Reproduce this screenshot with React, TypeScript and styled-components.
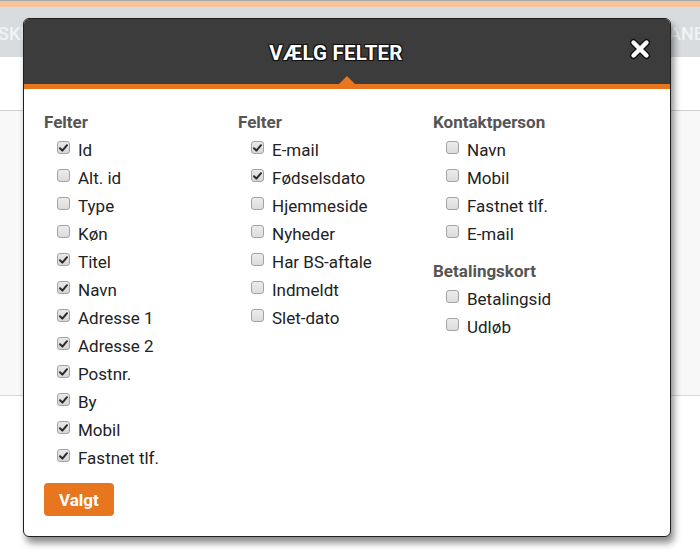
import React from 'react';
import styled, { createGlobalStyle } from 'styled-components';

const GlobalStyle = createGlobalStyle`
  html, body {
    margin: 0;
    padding: 0;
    background: #ffffff;
    font-family: Roboto, 'Liberation Sans', Arial, sans-serif;
  }
`;

const ORANGE = '#e8761f';

interface Field {
  label: string;
  checked?: boolean;
}

interface Group {
  title: string;
  fields: Field[];
}

const columns: Group[][] = [
  [
    {
      title: 'Felter',
      fields: [
        { label: 'Id', checked: true },
        { label: 'Alt. id' },
        { label: 'Type' },
        { label: 'Køn' },
        { label: 'Titel', checked: true },
        { label: 'Navn', checked: true },
        { label: 'Adresse 1', checked: true },
        { label: 'Adresse 2', checked: true },
        { label: 'Postnr.', checked: true },
        { label: 'By', checked: true },
        { label: 'Mobil', checked: true },
        { label: 'Fastnet tlf.', checked: true },
      ],
    },
  ],
  [
    {
      title: 'Felter',
      fields: [
        { label: 'E-mail', checked: true },
        { label: 'Fødselsdato', checked: true },
        { label: 'Hjemmeside' },
        { label: 'Nyheder' },
        { label: 'Har BS-aftale' },
        { label: 'Indmeldt' },
        { label: 'Slet-dato' },
      ],
    },
  ],
  [
    {
      title: 'Kontaktperson',
      fields: [{ label: 'Navn' }, { label: 'Mobil' }, { label: 'Fastnet tlf.' }, { label: 'E-mail' }],
    },
    {
      title: 'Betalingskort',
      fields: [{ label: 'Betalingsid' }, { label: 'Udløb' }],
    },
  ],
];

/* ---------- page behind the modal ---------- */

const Page = styled.div`
  position: relative;
  width: 700px;
  height: 557px;
  overflow: hidden;
  display: flex;
  flex-direction: column;
`;

const TopStrip = styled.div`
  height: 6px;
  border-top: 1px solid #a9a9a9;
  background: #f6c39b;
`;

const NavBar = styled.div`
  height: 50px;
  background: #d8dcdf;
  display: grid;
  grid-template-columns: 671px 29px;
  align-items: center;
  overflow: hidden;
  white-space: nowrap;
`;

const NavItem = styled.span`
  font-size: 18px;
  font-weight: 500;
  color: #f1f2f3;
  overflow: hidden;
  padding-top: 2px;
  text-indent: -2px;
`;

const Gap = styled.div`
  height: 53px;
  border-bottom: 1px solid #d2d2d2;
`;

const GreyPanel = styled.div`
  height: 284px;
  background: #f8f8f8;
  border-bottom: 1px solid #d9d9d9;
`;

/* ---------- modal ---------- */

const Modal = styled.div`
  position: absolute;
  left: 23px;
  top: 18px;
  width: 646px;
  border: 1px solid #1f1f1f;
  border-radius: 6px;
  background: #ffffff;
  box-shadow: 3px 6px 7px rgba(0, 0, 0, 0.45);
  overflow: hidden;
`;

const Header = styled.div`
  position: relative;
  height: 65px;
  background: #3c3c3c;
  border-bottom: 5px solid ${ORANGE};
  display: flex;
  align-items: center;
  justify-content: center;
  padding-right: 22px;
`;

const Title = styled.h2`
  margin: 2px 0 0;
  font-size: 20.5px;
  font-weight: 700;
  color: #ffffff;
  letter-spacing: 0.2px;
  text-shadow: 1px 1px 0 #111, -1px -1px 0 #111, 1px -1px 0 #111, -1px 1px 0 #111, 0 0 2px #000;
`;

const Arrow = styled.span`
  position: absolute;
  left: 315px;
  bottom: 0;
  width: 0;
  height: 0;
  border-left: 8px solid transparent;
  border-right: 8px solid transparent;
  border-bottom: 8px solid ${ORANGE};
`;

const CloseButton = styled.button`
  position: absolute;
  right: 19px;
  top: 19px;
  width: 22px;
  height: 22px;
  padding: 0;
  border: 0;
  background: transparent;
  display: flex;
  align-items: center;
  justify-content: center;
  cursor: pointer;
`;

const Body = styled.div`
  padding: 19px 20px 20px 20px;
`;

const Columns = styled.div`
  display: grid;
  grid-template-columns: 194px 195px 1fr;
`;

const Column = styled.div`
  display: flex;
  flex-direction: column;
`;

const GroupBox = styled.div`
  & + & {
    margin-top: 9px;
  }
`;

const GroupTitle = styled.div`
  height: 28px;
  line-height: 28px;
  font-size: 17px;
  font-weight: 700;
  color: #555555;
`;

const Row = styled.label`
  height: 28px;
  display: flex;
  align-items: center;
  padding-left: 13px;
  font-size: 17px;
  color: #222222;
  cursor: pointer;
`;

const Box = styled.span<{ $checked?: boolean }>`
  box-sizing: border-box;
  width: 13px;
  height: 13px;
  margin-right: 8px;
  margin-bottom: 5px;
  border: 1px solid #a3a3a3;
  border-radius: 3px;
  background: ${({ $checked }) =>
    $checked ? 'linear-gradient(#e9e9e9, #d6d6d6)' : 'linear-gradient(#ececec, #dcdcdc)'};
  display: flex;
  align-items: center;
  justify-content: center;
  flex: none;
`;

const Footer = styled.div`
  margin-top: 11px;
`;

const Button = styled.button`
  height: 33px;
  padding: 0 15px;
  border: 0;
  border-radius: 4px;
  background: ${ORANGE};
  color: #ffffff;
  font-family: Roboto, 'Liberation Sans', Arial, sans-serif;
  font-size: 17px;
  font-weight: 700;
  cursor: pointer;
`;

const CheckMark = () => (
  <svg width="9" height="8" viewBox="0 0 9 8">
    <path d="M1 4.2 L3.4 6.6 L8 1.2" fill="none" stroke="#2b2b2b" strokeWidth="2" strokeLinecap="round" strokeLinejoin="round" />
  </svg>
);

const CloseIcon = () => (
  <svg width="22" height="22" viewBox="0 0 22 22">
    <g stroke="#111" strokeWidth="7" strokeLinecap="round">
      <path d="M4.5 4.5 L17.5 17.5 M17.5 4.5 L4.5 17.5" />
    </g>
    <g stroke="#ffffff" strokeWidth="4.4" strokeLinecap="round">
      <path d="M4.5 4.5 L17.5 17.5 M17.5 4.5 L4.5 17.5" />
    </g>
  </svg>
);

export default function App() {
  return (
    <>
      <GlobalStyle />
      <Page>
        <TopStrip />
        <NavBar>
          <NavItem>SKRIV</NavItem>
          <NavItem>ANE</NavItem>
        </NavBar>
        <Gap />
        <GreyPanel />

        <Modal>
          <Header>
            <Title>VÆLG FELTER</Title>
            <Arrow />
            <CloseButton aria-label="Luk">
              <CloseIcon />
            </CloseButton>
          </Header>
          <Body>
            <Columns>
              {columns.map((groups, ci) => (
                <Column key={ci}>
                  {groups.map((g) => (
                    <GroupBox key={g.title}>
                      <GroupTitle>{g.title}</GroupTitle>
                      {g.fields.map((f) => (
                        <Row key={f.label}>
                          <Box $checked={f.checked}>{f.checked && <CheckMark />}</Box>
                          {f.label}
                        </Row>
                      ))}
                    </GroupBox>
                  ))}
                </Column>
              ))}
            </Columns>
            <Footer>
              <Button>Valgt</Button>
            </Footer>
          </Body>
        </Modal>
      </Page>
    </>
  );
}
